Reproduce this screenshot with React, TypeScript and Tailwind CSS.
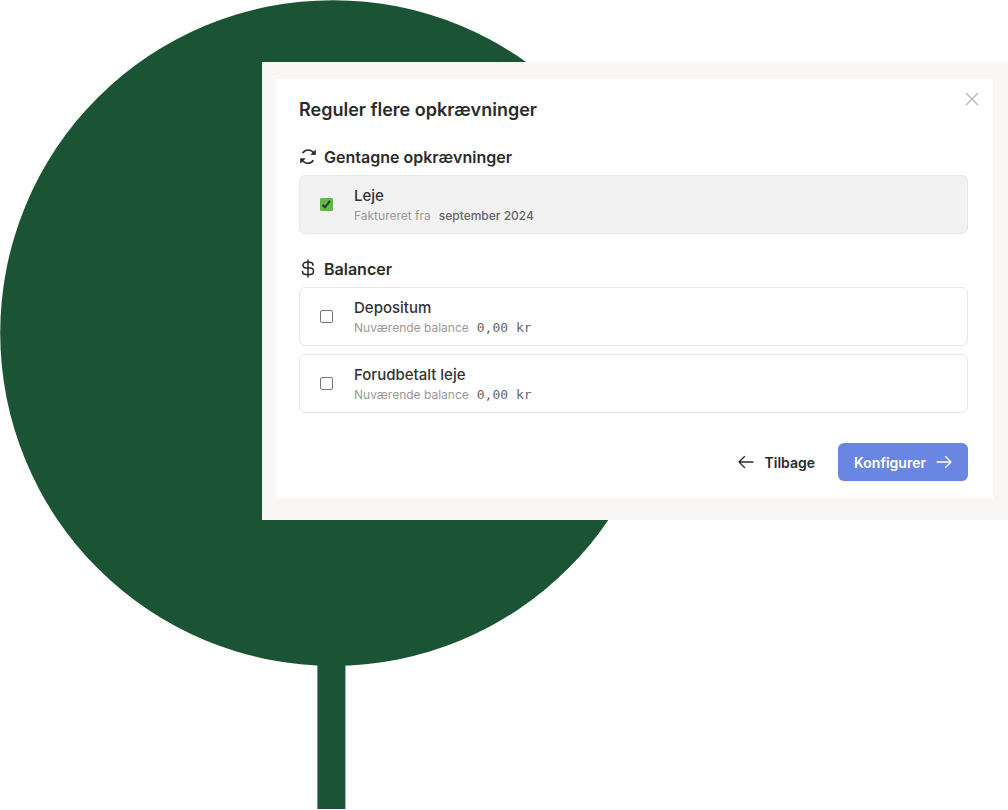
import { useState } from "react";
import type { ReactNode } from "react";

function Tree() {
  return (
    <svg aria-hidden="true" className="absolute top-0 left-0 -z-10" width="667" height="809" viewBox="0 0 667 809" fill="#1a5434">
      <circle cx="333" cy="333" r="332.800" />
      <rect x="317.4" y="640" width="28" height="169" />
    </svg>
  );
}

function SyncIcon() {
  return (
    <svg aria-hidden="true" width="18" height="18" viewBox="0 0 18 18" fill="none" stroke="currentColor" strokeWidth="1.6">
      <path d="M3.600 5C5 3 7 2 9.200 2c2.400 0 4.400 1.200 5.800 3.300" />
      <path d="M14.400 12.200C13 14.300 11 15.200 8.800 15.200c-2.400 0-4.400-1.200-5.800-3.300" />
      <path d="M16.400 2.200v4.300h-4.300zM1.600 15v-4.300h4.300z" fill="currentColor" stroke="currentColor" strokeWidth="0.800" />
    </svg>
  );
}

function DollarIcon() {
  return (
    <svg aria-hidden="true" width="18" height="20" viewBox="0 0 18 20" fill="none" stroke="currentColor" strokeWidth="1.5" strokeLinecap="round" strokeLinejoin="round">
      <path d="M9 1v17M14 6.200C14 4.300 12.600 3.200 10.800 3.200H7.200C5.400 3.200 4 4.300 4 6.100S5.400 9.100 7.200 9.100h4c2 0 3.300 1.200 3.300 3.200s-1.300 3.200-3.300 3.200H6.800C4.800 15.500 3.500 14.300 3.500 12.500" />
    </svg>
  );
}

function Arrow({ left = false }: { left?: boolean }) {
  return (
    <svg aria-hidden="true" width="16" height="16" viewBox="0 0 16 16" fill="none" stroke="currentColor" strokeWidth="1.3" strokeLinecap="round" strokeLinejoin="round">
      <path d={left ? "M15 8H1M6.500 2.500 1 8l5.500 5.500" : "M1 8h14M9.500 2.500 15 8l-5.500 5.500"} />
    </svg>
  );
}

function Option({ title, label, checked = false, children }: { title: string; label: string; checked?: boolean; children: ReactNode }) {
  const [on, setOn] = useState(checked);
  return (
    <label className={`flex min-h-[59px] items-center rounded-md border border-[#e6e6e6] pl-5 ${on ? "bg-[#f2f2f2]" : "bg-white"}`}>
      <span className="grid shrink-0">
        <input
          type="checkbox"
          checked={on}
          onChange={(e) => setOn(e.target.checked)}
          className="peer col-start-1 row-start-1 size-[13px] appearance-none rounded-xs border border-[#777] bg-white checked:rounded-[1px] checked:border-[#62b946] checked:bg-[#62b946]"
        />
        <svg aria-hidden="true" className="pointer-events-none invisible col-start-1 row-start-1 peer-checked:visible" width="13" height="13" viewBox="0 0 13 13" fill="none" stroke="#333" strokeWidth="2">
          <path d="M2.500 6.800 5 9.300l5-6.500" />
        </svg>
      </span>
      <span className="ml-[21px] flex flex-col pt-0.5">
        <span className="text-[15px] leading-5 font-medium text-[#333]">{title}</span>
        <span className="flex gap-2 text-[12px] leading-5 text-[#999]">
          {label}
          {children}
        </span>
      </span>
    </label>
  );
}

export default function App() {
  return (
    <div className="relative isolate min-h-screen bg-white pt-[62px] pl-[262px] font-['Inter',sans-serif] text-[#2b2b2b]">
      <Tree />
      <main className="bg-[#f8f7f5] pt-[17px] pr-[15px] pb-[22px] pl-[14px]">
        <section role="dialog" aria-labelledby="title" className="bg-white pt-3 pr-[25px] pb-[17px] pl-[23px]">
          <header className="flex items-start justify-between">
            <h1 id="title" className="pt-[5px] text-[18px] leading-7 font-semibold">Reguler flere opkrævninger</h1>
            <button type="button" aria-label="Luk" className="-mr-3 flex size-4 items-center justify-center text-[#b5b5b5]">
              <svg aria-hidden="true" width="16" height="16" viewBox="0 0 16 16" stroke="currentColor" strokeWidth="1.4">
                <path d="m2 2 12 12M14 2 2 14" />
              </svg>
            </button>
          </header>
          <h2 className="mt-4 flex h-[35px] items-center gap-[7px] pb-0.5 text-[16px] font-semibold"><SyncIcon />Gentagne opkrævninger</h2>
          <Option title="Leje" label="Faktureret fra" checked>
            <span className="font-medium text-[#666]">september 2024</span>
          </Option>
          <h2 className="mt-[18px] flex h-[35px] items-center gap-[7px] pb-0.5 text-[16px] font-semibold"><DollarIcon />Balancer</h2>
          <div className="flex flex-col gap-2">
            <Option title="Depositum" label="Nuværende balance">
              <span className="font-['DejaVu_Sans_Mono',monospace] text-[13px] text-[#666]">0,00 kr</span>
            </Option>
            <Option title="Forudbetalt leje" label="Nuværende balance">
              <span className="font-['DejaVu_Sans_Mono',monospace] text-[13px] text-[#666]">0,00 kr</span>
            </Option>
          </div>
          <footer className="mt-[30px] flex justify-end gap-[7px] text-[14px] font-semibold">
            <button type="button" className="flex h-[38px] items-center gap-2.5 px-4"><Arrow left />Tilbage</button>
            <button type="button" className="flex h-[38px] items-center gap-2.5 rounded-md bg-[#6a86e3] px-4 text-white shadow-xs">Konfigurer<Arrow /></button>
          </footer>
        </section>
      </main>
    </div>
  );
}
